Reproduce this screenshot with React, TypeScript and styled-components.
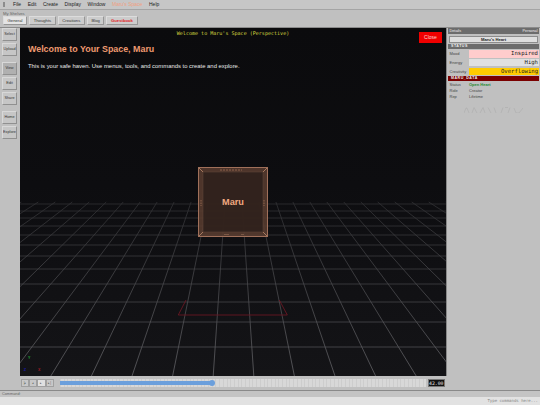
import styled, {createGlobalStyle} from 'styled-components';

const GlobalStyle = createGlobalStyle`
  html, body {
    margin: 0;
    padding: 0;
    background: #c0c0c0;
  }
`;

const menuItems = ['File', 'Edit', 'Create', 'Display', 'Window', "Maru's Space", 'Help'];
const tabs = ['General', 'Thoughts', 'Creations', 'Blog', 'Guestbook'];
const toolGroups = [['Select', 'Upload'], ['View', 'Edit', 'Share'], ['Home', 'Explore']];
const stats = [
  {label: 'Mood', value: 'Inspired', color: '#ffcccc'},
  {label: 'Energy', value: 'High', color: '#e0e0e0'},
  {label: 'Creativity', value: 'Overflowing', color: '#ffcc00'},
];
const transport = ['|◂', '◂', '▸', '▸|'];

// grid numbers are in viewport pixels, read off the reference
const CENTER = 213.5;
const VANISH_Y = 49;
const CLIP_Y = 174;
const BOTTOM = 348;
const BOTTOM_STEP = 40.6;
const rows = [176, 183, 190, 198, 207, 217, 228, 241, 256, 274, 294, 319];
const columns = Array.from({length: 42}, (_, i) => i - 20.5);

function columnX(c: number, y: number) {
  return CENTER + (c * BOTTOM_STEP * (y - VANISH_Y)) / (BOTTOM - VANISH_Y);
}

function Grid() {
  return (
    <GridSvg viewBox="0 0 426 348">
      <defs>
        <linearGradient id="row" gradientUnits="userSpaceOnUse" x1="0" y1={CLIP_Y} x2="0" y2={BOTTOM}>
          <stop offset="0" stopColor="#2a2a2d" />
          <stop offset="1" stopColor="#4c4c50" />
        </linearGradient>
        <linearGradient id="col" gradientUnits="userSpaceOnUse" x1="0" y1={CLIP_Y} x2="0" y2={BOTTOM}>
          <stop offset="0" stopColor="#303033" />
          <stop offset="1" stopColor="#626266" />
        </linearGradient>
      </defs>
      {rows.map(y => (
        <line key={y} x1="0" x2="426" y1={y} y2={y} stroke="url(#row)" strokeWidth="0.9" />
      ))}
      {columns.map(c => (
        <line
          key={c}
          x1={columnX(c, CLIP_Y)}
          y1={CLIP_Y}
          x2={columnX(c, BOTTOM)}
          y2={BOTTOM}
          stroke="url(#col)"
          strokeWidth="0.8"
        />
      ))}
      <path d="M166 272 L158.3 287 H267.3 L259.3 272" fill="none" stroke="#6a1722" strokeWidth="0.9" />
    </GridSvg>
  );
}

function Cube() {
  return (
    <CubeSvg viewBox="0 0 70 70">
      <rect x="0.5" y="0.5" width="69" height="69" fill="#5a3d30" fillOpacity="0.85" stroke="#a0705a" strokeWidth="1" />
      <rect x="5" y="5" width="60" height="60" fill="#2e201b" fillOpacity="0.88" stroke="#5c4436" strokeWidth="0.6" />
      <path d="M1 1 L5 5 M69 1 L65 5 M1 69 L5 65 M69 69 L65 65" stroke="#b08064" strokeWidth="0.9" />
      <path d="M22 3 H44" stroke="#a9775a" strokeWidth="0.7" strokeDasharray="2 1" />
      <path d="M3 33 V39 M66 33 V39" stroke="#a9775a" strokeWidth="0.7" strokeDasharray="1.5 1" />
      <path d="M26 67.5 H31 M43 67.5 H46" stroke="#8d6650" strokeWidth="0.7" />
    </CubeSvg>
  );
}

function App() {
  return (
    <>
      <GlobalStyle />
      <Page>
        <MenuBar>
          <MenuGrip />
          {menuItems.map(item => (
            <MenuItem key={item} $accent={item === "Maru's Space"}>
              {item}
            </MenuItem>
          ))}
        </MenuBar>
        <Shelf>
          <ShelfLabel>My Shelves</ShelfLabel>
          <TabRow>
            {tabs.map(tab => (
              <Tab key={tab} $active={tab === 'General'} $alert={tab === 'Guestbook'}>
                {tab}
              </Tab>
            ))}
          </TabRow>
        </Shelf>
        <Main>
          <ToolBar>
            {toolGroups.map(group => (
              <ToolGroup key={group[0]}>
                {group.map(tool => (
                  <ToolButton key={tool} $active={tool === 'View'}>
                    {tool}
                  </ToolButton>
                ))}
              </ToolGroup>
            ))}
          </ToolBar>
          <Center>
            <Viewport>
              <Grid />
              <ViewportTitle>Welcome to Maru's Space (Perspective)</ViewportTitle>
              <CloseButton>Close</CloseButton>
              <Welcome>
                <h1>Welcome to Your Space, Maru</h1>
                <p>This is your safe haven. Use menus, tools, and commands to create and explore.</p>
              </Welcome>
              <CubeWrap>
                <Cube />
                <CubeLabel>Maru</CubeLabel>
              </CubeWrap>
              <Axis $x={8} $y={327} $color="#1f9a35">Y</Axis>
              <Axis $x={3.8} $y={339} $color="#1a1a9a">Z</Axis>
              <Axis $x={18} $y={339} $color="#a01a25">X</Axis>
            </Viewport>
            <Timeline>
              <Transport>
                {transport.map((t, i) => (
                  <TransportButton key={i} $active={i === 2}>{t}</TransportButton>
                ))}
              </Transport>
              <Track>
                <Fill style={{width: `${(152 / 366) * 100}%`}} />
                <Thumb style={{left: `${(152 / 366) * 100}%`}} />
              </Track>
              <TimeBox>42.00</TimeBox>
            </Timeline>
          </Center>
          <Side>
            <SideHeader>
              <span>Details</span>
              <span>Personal</span>
            </SideHeader>
            <HeartTitle>Maru's Heart</HeartTitle>
            <SectionBar>STATUS</SectionBar>
            {stats.map(s => (
              <StatRow key={s.label}>
                <StatLabel>{s.label}</StatLabel>
                <StatValue $color={s.color}>{s.value}</StatValue>
              </StatRow>
            ))}
            <DataBar>MARU_DATA</DataBar>
            <DataRow>
              <StatLabel>Status</StatLabel>
              <DataValue $green>Open Heart</DataValue>
            </DataRow>
            <DataRow>
              <StatLabel>Role</StatLabel>
              <DataValue>Creator</DataValue>
            </DataRow>
            <DataRow>
              <StatLabel>Rep</StatLabel>
              <DataValue>Lifetime</DataValue>
            </DataRow>
            <Squiggle viewBox="0 0 59 6">
              <path
                d="M0 6 L2 1 L3 1 L5 6 M8 6 L10 0.5 L13 6 M16 6 L19 0.5 L21 6 M24 0.5 L27 6 M30 0.5 L32 6 M37 6 L39 0.5 M41 0.5 H44 M44 6 L46 0.5 M50 1 L52 6 H55 L59 1"
                fill="none"
                stroke="#a8a8a8"
                strokeWidth="0.5"
              />
            </Squiggle>
          </Side>
        </Main>
        <CommandBar>
          <CommandLabel>Command:</CommandLabel>
          <CommandInput>Type commands here...</CommandInput>
        </CommandBar>
      </Page>
    </>
  );
}

const Page = styled.div`
  width: 540px;
  height: 405px;
  display: flex;
  flex-direction: column;
  overflow: hidden;
  background: #c0c0c0;
  font-family: 'Liberation Sans', Arial, sans-serif;
`;

const MenuBar = styled.div`
  height: 9px;
  display: flex;
  align-items: center;
  gap: 6.6px;
  padding-left: 3px;
  background: #c6c6c6;
  border-bottom: 1px solid #a4a4a4;
`;

const MenuGrip = styled.div`
  width: 2px;
  height: 5px;
  margin-right: 1.5px;
  background: #8c8c8c;
`;

const MenuItem = styled.span<{$accent?: boolean}>`
  font-size: 5px;
  line-height: 9px;
  color: ${({$accent}) => ($accent ? '#f0a080' : '#222')};
`;

const Shelf = styled.div`
  height: 18px;
  padding: 1px 0 0 3px;
  box-sizing: border-box;
  background: #c0c0c0;
  border-bottom: 1px solid #8a8a8a;
`;

const ShelfLabel = styled.div`
  font-size: 4.2px;
  line-height: 5px;
  color: #666;
`;

const TabRow = styled.div`
  display: flex;
  gap: 2px;
`;

const Tab = styled.div<{$active?: boolean; $alert?: boolean}>`
  height: 9px;
  padding: 0 3.6px;
  box-sizing: border-box;
  font-size: 4.2px;
  line-height: 7px;
  color: ${({$alert}) => ($alert ? '#e02020' : '#333')};
  font-weight: ${({$alert}) => ($alert ? 700 : 400)};
  background: ${({$active}) => ($active ? '#e4e4e4' : '#cccccc')};
  border: 1px solid;
  border-color: #dcdcdc #969696 #969696 #dcdcdc;
`;

const Main = styled.div`
  flex: 1;
  display: flex;
  min-height: 0;
`;

const ToolBar = styled.div`
  width: 20px;
  display: flex;
  flex-direction: column;
  gap: 6px;
  box-sizing: border-box;
  background: #c0c0c0;
  overflow: hidden;
`;

const ToolGroup = styled.div`
  display: flex;
  flex-direction: column;
  gap: 2px;
  padding-left: 2px;
`;

const ToolButton = styled.div<{$active?: boolean}>`
  width: 15px;
  height: 13px;
  box-sizing: border-box;
  font-size: 3.8px;
  line-height: 11px;
  text-align: center;
  white-space: nowrap;
  overflow: hidden;
  color: #333;
  background: ${({$active}) => ($active ? '#b0b0b0' : '#c6c6c6')};
  border: 1px solid;
  border-color: #d8d8d8 #909090 #909090 #d8d8d8;
`;

const Center = styled.div`
  width: 427px;
  display: flex;
  flex-direction: column;
`;

const Viewport = styled.div`
  position: relative;
  height: 348px;
  background: linear-gradient(#0b0b0d, #0d0d10 45%, #141417);
  border-right: 1px solid #888;
  overflow: hidden;
`;

const GridSvg = styled.svg`
  position: absolute;
  inset: 0;
  width: 426px;
  height: 348px;
`;

const ViewportTitle = styled.div`
  position: relative;
  padding-top: 2px;
  font-family: 'DejaVu Sans Mono', monospace;
  font-size: 5.05px;
  line-height: 6px;
  text-align: center;
  color: #d8d840;
`;

const CloseButton = styled.div`
  position: absolute;
  top: 4px;
  right: 4px;
  width: 23px;
  height: 11px;
  font-size: 5px;
  line-height: 11px;
  text-align: center;
  color: #ffd0d0;
  background: #f00000;
`;

const Welcome = styled.div`
  position: relative;
  padding: 7px 8px 0;
  h1 {
    margin: 0;
    font-size: 8.9px;
    line-height: 12px;
    font-weight: 700;
    color: #f09a70;
  }
  p {
    margin: 7px 0 0;
    font-size: 5.9px;
    line-height: 8px;
    color: #e8e8e8;
  }
`;

const CubeWrap = styled.div`
  position: absolute;
  left: 178px;
  top: 139px;
  width: 70px;
  height: 70px;
`;

const CubeSvg = styled.svg`
  width: 70px;
  height: 70px;
  display: block;
`;

const CubeLabel = styled.div`
  position: absolute;
  inset: 0;
  font-size: 9.2px;
  font-weight: 700;
  line-height: 70px;
  text-align: center;
  color: #f0a880;
`;

const Axis = styled.span<{$x: number; $y: number; $color: string}>`
  position: absolute;
  left: ${({$x}) => $x}px;
  top: ${({$y}) => $y}px;
  font-size: 4px;
  font-weight: 700;
  font-family: 'DejaVu Sans Mono', monospace;
  color: ${({$color}) => $color};
`;

const Timeline = styled.div`
  flex: 1;
  display: flex;
  align-items: center;
  padding-left: 1px;
  background: #c0c0c0;
`;

const Transport = styled.div`
  display: flex;
  margin-right: 6px;
`;

const TransportButton = styled.div<{$active?: boolean}>`
  width: 8.2px;
  height: 8px;
  box-sizing: border-box;
  font-size: 3px;
  line-height: 7px;
  text-align: center;
  color: #555;
  background: ${({$active}) => ($active ? '#e0e0e0' : '#c8c8c8')};
  border: 0.5px solid #a0a0a0;
`;

const Track = styled.div`
  position: relative;
  width: 366px;
  height: 8px;
  margin-right: 2px;
  background: repeating-linear-gradient(90deg, #cdcdcd 0 1px, #d8d8d8 1px 3.7px);
`;

const Fill = styled.div`
  position: absolute;
  left: 0;
  top: 2.3px;
  height: 3.4px;
  background: #6b9fdc;
`;

const Thumb = styled.div`
  position: absolute;
  top: 1px;
  width: 6px;
  height: 6px;
  margin-left: -3px;
  border-radius: 50%;
  background: #6b9fdc;
`;

const TimeBox = styled.div`
  width: 17px;
  height: 8px;
  box-sizing: border-box;
  font-family: 'DejaVu Sans Mono', monospace;
  font-size: 4.8px;
  line-height: 7px;
  text-align: center;
  color: #e8e8e8;
  background: #111;
  border: 0.5px solid #777;
`;

const Side = styled.div`
  flex: 1;
  padding: 0 1px;
  box-sizing: border-box;
  background: #c0c0c0;
`;

const SideHeader = styled.div`
  display: flex;
  justify-content: space-between;
  height: 6px;
  padding: 0 1.5px;
  font-size: 3.8px;
  line-height: 6px;
  color: #eee;
  background: #6c6c6c;
`;

const HeartTitle = styled.div`
  height: 7px;
  box-sizing: border-box;
  margin: 2px 1px 1px;
  font-size: 4.2px;
  font-weight: 700;
  line-height: 6px;
  text-align: center;
  color: #222;
  background: #dedede;
  border: 0.5px solid #8c8c8c;
`;

const SectionBar = styled.div`
  height: 5px;
  padding-left: 3px;
  font-size: 3.6px;
  line-height: 5px;
  letter-spacing: 0.5px;
  font-weight: 700;
  color: #eee;
  background: #6c6c6c;
`;

const StatRow = styled.div`
  display: flex;
  height: 7.2px;
  margin-top: 1.4px;
`;

const StatLabel = styled.span`
  width: 21px;
  flex: none;
  box-sizing: border-box;
  padding-left: 1.5px;
  font-size: 4px;
  line-height: 7px;
  color: #444;
`;

const StatValue = styled.span<{$color: string}>`
  flex: 1;
  padding-right: 1px;
  font-family: 'DejaVu Sans Mono', monospace;
  font-size: 5.6px;
  line-height: 7px;
  text-align: right;
  color: #222;
  background: ${({$color}) => $color};
`;

const DataBar = styled(SectionBar)`
  margin-top: 1px;
  background: #7a0000;
`;

const DataRow = styled.div`
  display: flex;
  height: 6.2px;
`;

const DataValue = styled.span<{$green?: boolean}>`
  font-size: 4px;
  line-height: 7px;
  color: ${({$green}) => ($green ? '#1f8a30' : '#444')};
  font-weight: ${({$green}) => ($green ? 700 : 400)};
`;

const Squiggle = styled.svg`
  display: block;
  width: 59px;
  height: 6px;
  margin: 8px 0 0 16px;
`;

const CommandBar = styled.div`
  height: 14px;
  background: #c4c4c4;
  border-top: 1px solid #8a8a8a;
`;

const CommandLabel = styled.div`
  height: 6px;
  padding-left: 2px;
  font-size: 3.8px;
  line-height: 6px;
  color: #666;
`;

const CommandInput = styled.div`
  height: 8px;
  padding-right: 2px;
  font-family: 'DejaVu Sans Mono', monospace;
  font-size: 4px;
  line-height: 8px;
  text-align: right;
  color: #888;
  background: #e2e2e2;
`;

export default App;
